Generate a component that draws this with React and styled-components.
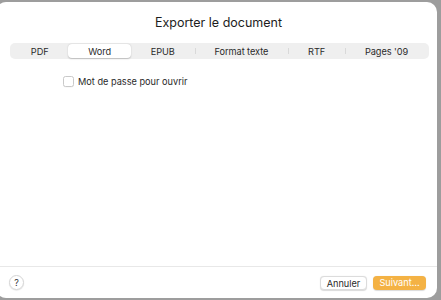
import React from "react";
import styled, { createGlobalStyle } from "styled-components";

const GlobalStyle = createGlobalStyle`
  html, body {
    margin: 0;
    padding: 0;
    background: #9d9d9d;
    font-family: Inter, "Noto Sans", sans-serif;
    -webkit-font-smoothing: antialiased;
  }
`;

const Backdrop = styled.div`
  width: 441px;
  height: 300px;
  overflow: hidden;
  padding-top: 2px;
  box-sizing: border-box;
`;

const Sheet = styled.div`
  margin-left: -4px;
  width: 441px;
  height: 296px;
  background: #ffffff;
  border-radius: 10px;
  display: flex;
  flex-direction: column;
  box-sizing: border-box;
`;

const Title = styled.h1`
  margin: 0;
  padding-top: 13px;
  height: 30px;
  box-sizing: border-box;
  text-align: center;
  font-size: 12.5px;
  font-weight: 400;
  color: #1d1d1d;
  padding-left: 4px;
`;

const Segmented = styled.div`
  display: flex;
  margin: 11px 8px 0 14px;
  height: 16px;
  background: #efefef;
  border-radius: 5px;
  padding: 0 1px;
`;

const Segment = styled.div`
  flex: 1 1 auto;
  display: flex;
  align-items: center;
  justify-content: center;
  position: relative;
  padding: 0 19px;
  font-size: 9.2px;
  letter-spacing: -0.05px;
  color: #2a2a2a;
  border-radius: 4px;
  margin: 1px 0;
  background: ${({ $active }) => ($active ? "#ffffff" : "transparent")};
  box-shadow: ${({ $active }) =>
    $active ? "0 0.5px 1.5px rgba(0,0,0,0.22)" : "none"};
  &::before {
    content: "";
    display: ${({ $divider }) => ($divider ? "block" : "none")};
    position: absolute;
    left: 0;
    top: 4px;
    bottom: 4px;
    width: 1px;
    background: #d9d9d9;
  }
`;

const Body = styled.div`
  flex: 1;
  padding: 17px 0 0 67px;
`;

const CheckRow = styled.label`
  display: flex;
  align-items: center;
  gap: 4px;
  font-size: 9.2px;
  color: #2a2a2a;
`;

const Box = styled.span`
  width: 9px;
  height: 9px;
  border: 1px solid #c9c9c9;
  border-radius: 2.5px;
  background: #fff;
  box-shadow: 0 0.5px 0.5px rgba(0,0,0,0.05);
`;

const Footer = styled.div`
  border-top: 1px solid #e8e8e8;
  height: 31px;
  display: flex;
  align-items: center;
  padding: 0 11px 0 13px;
  gap: 6px;
`;

const Help = styled.div`
  width: 13px;
  height: 13px;
  border-radius: 50%;
  border: 0.5px solid #d4d4d4;
  box-shadow: 0 0.5px 1px rgba(0,0,0,0.15);
  display: flex;
  align-items: center;
  justify-content: center;
  font-size: 9px;
  color: #333;
  margin-right: auto;
`;

const Button = styled.button`
  font-family: inherit;
  height: 14px;
  padding: 0;
  width: ${({ $primary }) => ($primary ? "53px" : "47px")};
  font-size: 9.2px;
  border-radius: 4px;
  line-height: 14px;
  border: ${({ $primary }) => ($primary ? "none" : "0.5px solid #dcdcdc")};
  background: ${({ $primary }) => ($primary ? "#f4b244" : "#ffffff")};
  color: ${({ $primary }) => ($primary ? "#ffffff" : "#2a2a2a")};
  box-shadow: 0 0.5px 1px rgba(0,0,0,0.15);
`;

const tabs = ["PDF", "Word", "EPUB", "Format texte", "RTF", "Pages '09"];
const active = 1;

export default function App() {
  return (
    <Backdrop>
      <GlobalStyle />
      <Sheet>
        <Title>Exporter le document</Title>
        <Segmented>
          {tabs.map((t, i) => (
            <Segment
              key={t}
              $active={i === active}
              $divider={i > 0 && i !== active && i !== active + 1}
            >
              {t}
            </Segment>
          ))}
        </Segmented>
        <Body>
          <CheckRow>
            <Box />
            Mot de passe pour ouvrir
          </CheckRow>
        </Body>
        <Footer>
          <Help>?</Help>
          <Button>Annuler</Button>
          <Button $primary>Suivant…</Button>
        </Footer>
      </Sheet>
    </Backdrop>
  );
}
